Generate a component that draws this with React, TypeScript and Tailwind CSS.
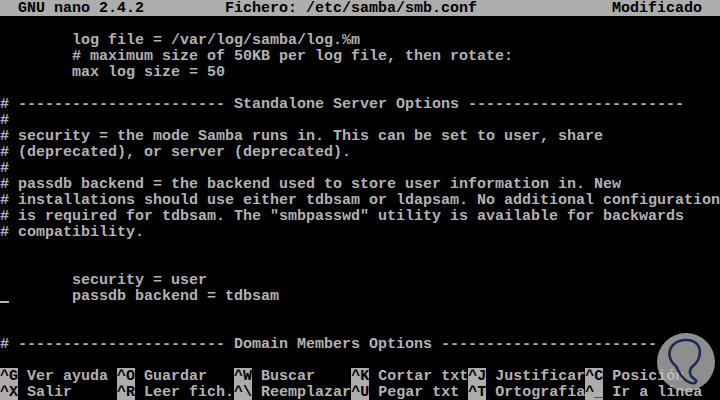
import React from "react";

const COLS = 80;

// pad a string with spaces to n columns
function pad(s: string, n: number) {
  return s.length >= n ? s : s + " ".repeat(n - s.length);
}

const body: string[] = [
  "",
  "        log file = /var/log/samba/log.%m",
  "        # maximum size of 50KB per log file, then rotate:",
  "        max log size = 50",
  "",
  "# ----------------------- Standalone Server Options ------------------------",
  "#",
  "# security = the mode Samba runs in. This can be set to user, share",
  "# (deprecated), or server (deprecated).",
  "#",
  "# passdb backend = the backend used to store user information in. New",
  "# installations should use either tdbsam or ldapsam. No additional configuration",
  "# is required for tdbsam. The \"smbpasswd\" utility is available for backwards",
  "# compatibility.",
  "",
  "",
  "        security = user",
  "CURSOR        passdb backend = tdbsam",
  "",
  "",
  "# ----------------------- Domain Members Options ------------------------",
  "",
];

const help: [string, string][][] = [
  [
    ["^G", "Ver ayuda"],
    ["^O", "Guardar"],
    ["^W", "Buscar"],
    ["^K", "Cortar txt"],
    ["^J", "Justificar"],
    ["^C", "Posición"],
  ],
  [
    ["^X", "Salir"],
    ["^R", "Leer fich."],
    ["^\\", "Reemplazar"],
    ["^U", "Pegar txt"],
    ["^T", "Ortografía"],
    ["^_", "Ir a línea"],
  ],
];

function Line({ text }: { text: string }) {
  if (text.startsWith("CURSOR")) {
    return (
      <div className="h-[16px] pt-px whitespace-pre">
        <span className="inline-block w-[9px] h-[14px] align-top border-b-2 border-[#b4b4b4]" />
        {text.slice(7)}
      </div>
    );
  }
  return <div className="h-[16px] pt-px whitespace-pre">{text || " "}</div>;
}

function Logo() {
  return (
    <div className="absolute left-[657px] top-[333px] w-[58px] h-[58px] rounded-full bg-[#bdbdbd]/75">
      <svg viewBox="0 0 58 58" className="w-full h-full">
        <path
          d="M19 33 C12 28 10 18 16 12 C22 6 34 5 40 11 C45 17 43 27 37 32 C33 35 32 39 34 43 C36 46 40 46 39 49 C37 51 33 50 30 48 C25 45 22 40 19 33 Z"
          fill="none"
          stroke="#1c2b4f"
          strokeWidth="2.6"
          strokeLinejoin="round"
          strokeLinecap="round"
        />
      </svg>
    </div>
  );
}

export default function App() {
  const title =
    pad(pad(pad("  GNU nano 2.4.2", 25) + "Fichero: /etc/samba/smb.conf", 68) + "Modificado", COLS);

  return (
    <div className="relative w-[720px] h-[400px] overflow-hidden bg-black text-[#b2b2b2] font-['Liberation_Mono',monospace] text-[15px] leading-[16px] font-bold">
      {/* Title bar */}
      <div className="h-[16px] pt-px whitespace-pre bg-[#adadad] text-black">{title}</div>

      {/* File content */}
      {body.map((l, i) => (
        <Line key={i} text={l} />
      ))}

      {/* Shortcut rows */}
      {help.map((row, r) => (
        <div key={r} className="h-[16px] whitespace-pre flex">
          {row.map(([k, label], i) => (
            <span key={i} className="flex">
              <span className="bg-[#adadad] text-black pt-px">{k}</span>
              <span className="pt-px">{i === row.length - 1 ? " " + label : pad(" " + label, 11)}</span>
            </span>
          ))}
        </div>
      ))}

      <Logo />
    </div>
  );
}
